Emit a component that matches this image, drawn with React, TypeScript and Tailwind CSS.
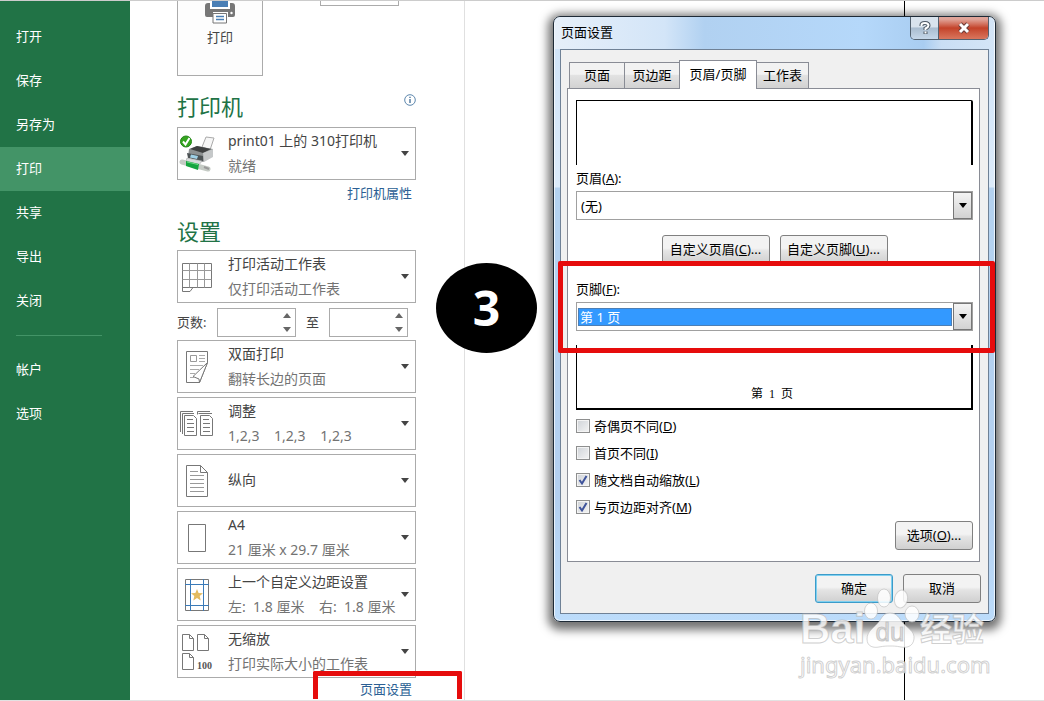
import React from 'react';
import { clsx } from 'clsx';

const menuItems = ['打开', '保存', '另存为', '打印', '共享', '导出', '关闭'];
const accountItems = ['帐户', '选项'];
const tabs = ['页面', '页边距', '页眉/页脚', '工作表'];

function PrintIcon() {
    return (
        <svg width="30" height="23" viewBox="0 0 30 23" aria-hidden="true">
            <path d="M3 2h24a3 3 0 0 1 3 3v9a2 2 0 0 1-2 2h-5v-5H8v5H2a2 2 0 0 1-2-2V5a3 3 0 0 1 3-3z" fill="#777" />
            <path d="M5 0h20v8H5z" fill="#fff" />
            <path d="M7 0h16v6H7z" fill="#4a7fb5" />
            <path d="M8 12.500h13.500v9.500H8z" fill="#fff" stroke="#777" />
            <path d="M11 15.500h8M11 18.500h8" stroke="#4a7fb5" strokeWidth="1.500" />
            <circle cx="26.500" cy="12" r="1.200" fill="#fff" />
        </svg>
    );
}

function DeviceIcon() {
    return (
        <svg width="36" height="40" viewBox="0 0 36 40" aria-hidden="true">
            <path d="M23 13 27 3 35 4 31 16z" fill="#f6f6f6" stroke="#aaa" />
            <path d="M10 15 18 12 34 15 34 22 24 28 9 23z" fill="#8d9192" />
            <path d="M11 15 18 12 32 15 24 19z" fill="#3e4040" />
            <path d="M24 19 34 15 34 23 25 28z" fill="#c5c8c9" />
            <path d="M8 19 24 22 24 27 9 24z" fill="#4c5254" />
            <path d="M12 20.500 19 22 18 25 11 23.500z" fill="#9fd0e6" />
            <path d="M8 24 23 27 20 31 7 27z" fill="#d9dcdd" stroke="#999" strokeWidth="0.500" />
            <path d="M3 28 29 35" stroke="#c5cbc5" strokeWidth="5" strokeLinecap="round" />
            <path d="M7 27 20 30 19 36 7 32z" fill="#15a53f" />
            <path d="M8 28 19 30.500" stroke="#6fdc87" />
            <path d="M25 33 30 35" stroke="#999" strokeWidth="2" />
            <circle cx="7" cy="7.500" r="5.500" fill="#35a520" stroke="#24841a" />
            <path d="M4 7.500 6.500 10.500 10.500 4" fill="none" stroke="#fff" strokeWidth="2" />
        </svg>
    );
}

function SheetIcon() {
    return (
        <svg width="32" height="32" viewBox="0 0 32 32" fill="none" stroke="#777" aria-hidden="true">
            <path d="M1.500 2.500h29v24H12l-3 4H1.500z" />
            <path d="M1.500 26.500H12" />
            <path d="M1.500 9.500h29M1.500 18.500h29M8.500 2.500v24M16.500 2.500v24M23.500 2.500v24" stroke="#999" />
        </svg>
    );
}

function DuplexIcon() {
    return (
        <svg width="32" height="34" viewBox="0 0 32 34" fill="none" stroke="#777" aria-hidden="true">
            <path d="M5.500 1.500h21v11l-8 20h-13z" />
            <path d="M26.500 12.500 12 26.500l6 2.500.500 3.500z" fill="#fff" />
            <path d="M9.500 5.500h6v6h-6z" stroke="#999" />
            <path d="M18 5.500h6M18 8.500h6M18 11.500h6M9 15.500h13M9 19.500h9M9 23.500h5M9 27.500h4" stroke="#aaa" />
        </svg>
    );
}

function CollateIcon() {
    return (
        <svg width="36" height="28" viewBox="0 0 36 28" fill="none" stroke="#777" aria-hidden="true">
            <path d="M1.500 22V1.500H14M3.500 24V3.500H15M18.500 1.500H31M19.500 3.500H33M18.500 1.500v3" />
            <path d="M5.500 5.500h9l3 3v17h-12z M21.500 5.500h9l3 3v17h-12z" fill="#fff" />
            <path d="M8 9.500h6M8 13.500h7M8 17.500h7M8 21.500h7M24 9.500h6M24 13.500h7M24 17.500h7M24 21.500h7" />
        </svg>
    );
}

function PortraitIcon() {
    return (
        <svg width="24" height="34" viewBox="0 0 24 34" fill="none" stroke="#777" aria-hidden="true">
            <path d="M1.500 1.500h14l7 7v24h-21z" />
            <path d="M15.500 1.500v7h7" />
            <path d="M5 7.500h8M5 11.500h14M5 15.500h14M5 19.500h14M5 23.500h14M5 27.500h14" stroke="#999" />
        </svg>
    );
}

function PaperIcon() {
    return (
        <svg width="20" height="30" viewBox="0 0 20 30" fill="none" stroke="#777" aria-hidden="true">
            <path d="M1.500 1.500h17v27h-17z" />
        </svg>
    );
}

function MarginIcon() {
    return (
        <svg width="24" height="34" viewBox="0 0 24 34" fill="none" aria-hidden="true">
            <path d="M.500 1.500h23v31H.500z" stroke="#777" />
            <path d="M5.500 1v32M18.500 1v32M0 6.500h24M0 27.500h24" stroke="#3a7ab8" />
            <path d="m12 11 1.600 4 4.400.300-3.300 2.800 1 4.400-3.700-2.400-3.700 2.400 1-4.400L6 15.300l4.400-.300z" fill="#e3bb5f" />
        </svg>
    );
}

function ScaleIcon() {
    return (
        <svg width="32" height="38" viewBox="0 0 32 38" fill="none" stroke="#777" aria-hidden="true">
            <path d="M1.500 1.500h7l4 4v12h-11zM8.500 1.500v4h4" />
            <path d="M16.500 1.500h7l4 4v12h-11zM23.500 1.500v4h4" />
            <path d="M1.500 20.500h7l4 4v12h-11zM8.500 20.500v4h4" />
            <text x="16" y="36" fontSize="10" fontWeight="700" fill="#555" stroke="none" fontFamily="Liberation Serif, serif">100</text>
        </svg>
    );
}

function InfoIcon() {
    return (
        <svg width="12" height="12" viewBox="0 0 12 12" fill="none" stroke="#5d87ad" aria-hidden="true">
            <circle cx="6" cy="6" r="5.300" />
            <path d="M6 5v4M6 2.800v1.200" stroke="#2b5c8a" strokeWidth="1.200" />
        </svg>
    );
}

function Caret({ up = false }: { up?: boolean }) {
    return (
        <svg width="8" height="5" viewBox="0 0 8 5" aria-hidden="true">
            <path d={up ? 'M0 5 4 0 8 5z' : 'M0 0h8L4 5z'} fill="currentColor" />
        </svg>
    );
}

function Setting({ icon, title, detail }: { icon: React.ReactNode; title: string; detail?: string }) {
    return (
        <button
            type="button"
            aria-haspopup="listbox"
            className="flex h-[53px] w-full shrink-0 items-center border border-[#ababab] bg-white pr-1.5 text-left text-sm leading-[25px]"
        >
            <span className="flex w-[38px] shrink-0 justify-center">{icon}</span>
            <span className="ml-3 min-w-0 flex-1 pb-0.5 whitespace-pre text-[#444]">
                {title}
                {detail && <span className="block text-[#737373]">{detail}</span>}
            </span>
            <span className="text-[#444]">
                <Caret />
            </span>
        </button>
    );
}

function PageBox({ label }: { label: string }) {
    return (
        <span className="flex h-[29px] w-[79px] border border-[#ababab] bg-white">
            <input type="text" aria-label={label} className="w-full min-w-0 px-1 text-sm outline-none" />
            <span className="flex w-4 shrink-0 flex-col items-center justify-between py-1 text-[#666]">
                <Caret up />
                <Caret />
            </span>
        </span>
    );
}

function DialogButton({ children, className }: { children: React.ReactNode; className: string }) {
    return (
        <button
            type="button"
            className={clsx(
                'h-[29px] rounded-[3px] border bg-linear-to-b from-[#f3f3f3] from-45% via-[#e4e4e4] via-55% to-[#d0d0d0] pb-0.5',
                className
            )}
        >
            {children}
        </button>
    );
}

function ComboArrow() {
    return (
        <span className="pointer-events-none flex w-[19px] shrink-0 items-center justify-center border border-[#777] bg-linear-to-b from-[#f4f4f4] to-[#d2d2d2]">
            <Caret />
        </span>
    );
}

function CheckRow({ label, hotkey, checked = false }: { label: string; hotkey: string; checked?: boolean }) {
    return (
        <label className="flex h-[27px] items-center">
            <span className="grid">
                <input
                    type="checkbox"
                    defaultChecked={checked}
                    className="peer col-start-1 row-start-1 size-[14px] appearance-none border border-[#8e8f8f] bg-linear-to-br from-[#cfd3d8] to-[#f4f4f4] shadow-[inset_0_0_0_1px_#f4f4f4]"
                />
                <svg viewBox="0 0 14 14" className="pointer-events-none invisible col-start-1 row-start-1 size-[14px] peer-checked:visible">
                    <path d="M3.500 7 6 10.500 10.500 3" fill="none" stroke="#3e539b" strokeWidth="2" />
                </svg>
            </span>
            <span className="ml-1">
                {label}(<u>{hotkey}</u>)
            </span>
        </label>
    );
}

function PageSetupDialog() {
    return (
        <section
            role="dialog"
            aria-label="页面设置"
            className="relative rounded-[7px] border border-[#1e2a36] bg-[linear-gradient(to_bottom,#cfe3f8_0,#dcebfa_170px,#b4d2f0_171px,#b4d0f0_80%,#bcdcfb_100%)] px-1.5 pb-[7px] text-[13px] leading-5 text-black shadow-[0_3px_10px_5px_rgba(0,0,0,0.55),inset_0_0_0_1px_rgba(255,255,255,0.7)]"
        >
            {/* Title bar */}
            <header className="-mx-[5px] flex h-8 items-start justify-between rounded-t-md bg-[linear-gradient(to_right,#e6eff9,#d3e5f8_25%,#b1d1f1_34%,#b5d8fa_70%,#a9cdf1_84%,#c9def4_88%,#d4e5f7)] pr-[5px] pl-1.5">
                <h2 className="pt-[5px]">页面设置</h2>
                <div className="flex h-[23px] overflow-hidden rounded-b-[5px] border border-t-0 border-[#53616f]">
                    <button
                        type="button"
                        aria-label="帮助"
                        className="flex w-7 items-center justify-center border-r border-[#53616f] bg-linear-to-b from-[#d9e3ed] from-45% via-[#a9bccf] via-50% to-[#c6d8ea]"
                    >
                        <svg width="12" height="14" viewBox="0 0 12 14" fill="none">
                            <path d="M2.500 5V4Q2.500 2 6 2T9.500 4.500Q9.500 6 6.500 7.500V9M6.500 10.500v2.500" stroke="#4d5864" strokeWidth="4" />
                            <path d="M2.500 5V4Q2.500 2 6 2T9.500 4.500Q9.500 6 6.500 7.500V9M6.500 10.500v2" stroke="#fff" strokeWidth="2" />
                        </svg>
                    </button>
                    <button
                        type="button"
                        aria-label="关闭"
                        className="flex w-[49px] items-center justify-center bg-linear-to-b from-[#e0a499] from-10% via-[#c34229] via-50% to-[#d9765d]"
                    >
                        <svg width="14" height="12" viewBox="0 0 14 12" fill="none">
                            <path d="m3 2 8 8M11 2l-8 8" stroke="#6b3c38" strokeWidth="5" />
                            <path d="m3 2 8 8M11 2l-8 8" stroke="#fff" strokeWidth="3" />
                        </svg>
                    </button>
                </div>
            </header>

            <div className="border border-[#6f8196] bg-[#f0f0f0] pt-2.5 pr-2 pb-[10px] pl-1.5">
                {/* Tabs */}
                <div role="tablist" className="flex h-7 items-end pl-0.5">
                    {tabs.map((tab) => (
                        <button
                            key={tab}
                            type="button"
                            role="tab"
                            aria-selected={tab === '页眉/页脚'}
                            className={clsx(
                                'border border-b-0 border-[#898c95] pb-0.5',
                                tab === '页眉/页脚'
                                    ? 'z-10 -mb-px h-[29px] w-[78px] bg-white'
                                    : 'h-[26px] w-[55px] bg-linear-to-b from-[#f2f2f2] from-45% via-[#e2e2e2] via-50% to-[#d2d2d2] not-last:border-r-0 last:w-[52px] last:border-l-0'
                            )}
                        >
                            {tab}
                        </button>
                    ))}
                </div>

                {/* Header / footer panel */}
                <div role="tabpanel" className="border border-[#898c95] bg-white pt-[11px] pr-1.5 pb-[11px] pl-2">
                    <div className="h-[65px] rounded-tr-[2px] border-t border-r-2 border-l border-black" />

                    <label htmlFor="header" className="mt-[3px] block">
                        页眉(<u>A</u>):
                    </label>
                    <div className="mt-[3px] flex h-[29px] border border-[#a0a0a0]">
                        <select id="header" className="w-full min-w-0 appearance-none bg-white px-1 outline-none">
                            <option>(无)</option>
                        </select>
                        <ComboArrow />
                    </div>

                    <div className="mt-[15px] flex justify-center gap-2.5">
                        <DialogButton className="w-[108px] border-[#808080]">
                            自定义页眉(<u>C</u>)...
                        </DialogButton>
                        <DialogButton className="w-[108px] border-[#808080]">
                            自定义页脚(<u>U</u>)...
                        </DialogButton>
                    </div>

                    <div className="relative mt-[15px]">
                        <label htmlFor="footer" className="block">
                            页脚(<u>F</u>):
                        </label>
                        <div className="mt-[3px] flex h-[29px] border border-[#a0a0a0]">
                            <div className="flex flex-1 items-center px-px">
                                <select
                                    id="footer"
                                    className="h-[18px] w-full appearance-none border border-[#4d7fb5] bg-[#3399ff] px-px leading-4 text-white outline-none"
                                >
                                    <option>第 1 页</option>
                                </select>
                            </div>
                            <ComboArrow />
                        </div>
                        {/* Red callout round the footer choice */}
                        <div className="pointer-events-none absolute -top-[18px] -right-[22px] -bottom-[22px] -left-[18px] z-20 rounded-[2px] border-5 border-[#e60c0c]" />
                    </div>

                    <div className="mt-3.5 flex h-[65px] items-end justify-center border-r-2 border-b-2 border-l border-black pr-1 pb-1 font-['Liberation_Serif','Noto_Sans_CJK_SC',serif] text-xs leading-5">
                        <span className="whitespace-pre">第  1  页</span>
                    </div>

                    <div className="mt-0.5 mb-px">
                        <CheckRow label="奇偶页不同" hotkey="D" />
                        <CheckRow label="首页不同" hotkey="I" />
                        <CheckRow label="随文档自动缩放" hotkey="L" checked />
                        <CheckRow label="与页边距对齐" hotkey="M" checked />
                    </div>
                    <div className="flex justify-end">
                        <DialogButton className="w-[78px] border-[#808080]">
                            选项(<u>O</u>)...
                        </DialogButton>
                    </div>
                </div>

                <div className="-mr-px mt-3 flex justify-end gap-2.5">
                    <DialogButton className="w-[78px] border-[#3c9bc9] shadow-[inset_0_0_0_1px_#7fd0f0]">确定</DialogButton>
                    <DialogButton className="w-[78px] border-[#808080]">取消</DialogButton>
                </div>
            </div>
        </section>
    );
}

function Watermark() {
    return (
        <div className="pointer-events-none absolute right-14 bottom-[22px] w-[188px] text-white/80 [-webkit-text-stroke:1px_rgba(175,175,175,0.6)]">
            <div className="flex items-end">
                <span className="w-16 font-['Liberation_Sans',sans-serif] text-[42px] leading-[42px] font-bold">Bai</span>
                <span className="relative">
                    <svg width="56" height="62" viewBox="0 0 56 62" fill="#fff" fillOpacity="0.850" stroke="#bbb" strokeOpacity="0.600">
                        <ellipse cx="7" cy="23" rx="6.500" ry="8" />
                        <ellipse cx="20" cy="10" rx="6.500" ry="9" />
                        <ellipse cx="37" cy="11" rx="6.500" ry="9" transform="rotate(12 37 11)" />
                        <ellipse cx="48" cy="26" rx="7" ry="8" />
                        <path d="M26 25c7 0 9 5 13 10s12 8 11 16-8 9-13 8-8-1-11-1-6 0-11 1S3 59 3 51s7-11 11-16 5-10 12-10z" />
                    </svg>
                    <span className="absolute right-1 bottom-1 left-0 text-center font-['Liberation_Sans',sans-serif] text-[26px] leading-7 text-[#ddd]">
                        du
                    </span>
                </span>
                <span className="text-[32px] leading-[42px] font-bold whitespace-nowrap">经验</span>
            </div>
            <div className="text-[22px] leading-7">jingyan.baidu.com</div>
        </div>
    );
}

export default function App() {
    return (
        <div className="flex min-h-screen overflow-hidden border-t border-b border-t-[#ccc] border-b-[#e2e2e2] bg-white font-['Noto_Sans','Noto_Sans_CJK_SC',sans-serif]">
            {/* Backstage menu */}
            <nav className="w-[130px] shrink-0 bg-[#217346] pt-3.5 text-[13px] text-white">
                {menuItems.map((item) => (
                    <a
                        key={item}
                        href="#"
                        aria-current={item === '打印' ? 'page' : undefined}
                        className={clsx('flex h-11 items-center pl-4', item === '打印' && 'bg-[#439467]')}
                    >
                        {item}
                    </a>
                ))}
                <hr className="mt-3 mr-7 mb-3 ml-4 border-[#439467]" />
                {accountItems.map((item) => (
                    <a key={item} href="#" className="flex h-11 items-center pl-4">
                        {item}
                    </a>
                ))}
            </nav>

            {/* Print settings */}
            <main className="relative w-[335px] shrink-0 border-r border-[#e0e0e0] pr-12 pl-[47px]">
                <div className="flex items-start justify-between pr-[17px]">
                    <button
                        type="button"
                        className="flex h-[75px] w-[86px] flex-col items-center border border-t-0 border-[#ababab] bg-[#fdfdfd] text-[13px] leading-5 text-[#444]"
                    >
                        <PrintIcon />
                        <span className="mt-[3px]">打印</span>
                    </button>
                    <input type="text" aria-label="份数" className="h-[5px] w-[79px] border border-t-0 border-[#ababab]" />
                </div>

                <div className="mt-3.5 flex h-8 items-start justify-between">
                    <h1 className="text-[22px] leading-8 text-[#217346]">打印机</h1>
                    <span className="mt-1">
                        <InfoIcon />
                    </span>
                </div>
                <div className="mt-[5px]">
                    <Setting icon={<DeviceIcon />} title="print01 上的 310打印机" detail="就绪" />
                </div>
                <div className="mt-[3px] flex justify-end pr-1">
                    <a href="#" className="text-[13px] leading-5 text-[#2b5f94]">打印机属性</a>
                </div>

                <h1 className="mt-3 text-[22px] leading-8 text-[#217346]">设置</h1>
                <div className="mt-[3px]">
                    <Setting icon={<SheetIcon />} title="打印活动工作表" detail="仅打印活动工作表" />
                </div>
                <div className="mt-[5px] flex items-center text-[13px] text-[#444]">
                    <span className="w-10">页数:</span>
                    <PageBox label="起始页" />
                    <span className="w-[33px] text-center">至</span>
                    <PageBox label="结束页" />
                </div>
                <div className="mt-[3px] flex flex-col gap-1">
                    <Setting icon={<DuplexIcon />} title="双面打印" detail="翻转长边的页面" />
                    <Setting icon={<CollateIcon />} title="调整" detail="1,2,3    1,2,3    1,2,3" />
                    <Setting icon={<PortraitIcon />} title="纵向" />
                    <Setting icon={<PaperIcon />} title="A4" detail="21 厘米 x 29.7 厘米" />
                    <Setting icon={<MarginIcon />} title="上一个自定义边距设置" detail="左:  1.8 厘米    右:  1.8 厘米" />
                    <Setting icon={<ScaleIcon />} title="无缩放" detail="打印实际大小的工作表" />
                </div>
                <div className="relative mt-px flex justify-end pr-1">
                    <a href="#" className="text-[13px] leading-5 text-[#2b5f94]">页面设置</a>
                    <div className="pointer-events-none absolute -top-2 -right-[46px] bottom-0 w-[149px] rounded-t-[2px] border-5 border-b-0 border-[#e60c0c]" />
                </div>

                {/* Step marker */}
                <div className="absolute top-[262px] -right-[73px] z-20 flex h-[90px] w-[101px] items-center justify-center rounded-[50%] bg-black text-5xl font-bold text-white">
                    3
                </div>
            </main>

            {/* Preview area with the page setup window over it */}
            <div className="relative min-w-0 flex-1 pt-[15px] pr-12 pl-[88px]">
                <div className="absolute top-0 right-[139px] bottom-0 w-px bg-black" />
                <PageSetupDialog />
                <Watermark />
            </div>
        </div>
    );
}
